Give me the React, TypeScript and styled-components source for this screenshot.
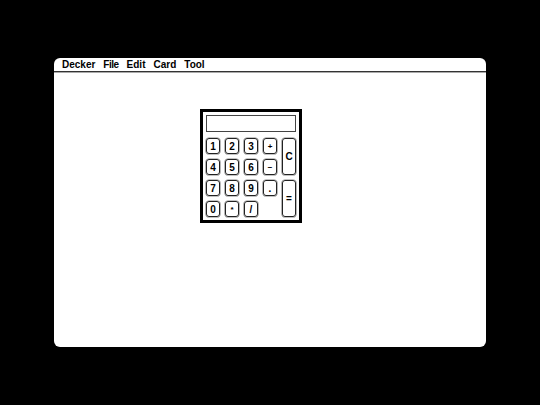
import React from "react";
import styled, { createGlobalStyle } from "styled-components";

const Global = createGlobalStyle`
  html, body { margin: 0; padding: 0; background: #000; }
  body { width: 540px; height: 405px; overflow: hidden; font-family: "Liberation Sans", Arial, sans-serif; }
`;

const Stage = styled.div`
  width: 540px;
  height: 405px;
  box-sizing: border-box;
  padding: 58px 54px 0 54px;
  background: #000;
`;

const Screen = styled.div`
  width: 432px;
  height: 289px;
  background: #fff;
  border-radius: 6px;
  display: flex;
  flex-direction: column;
  overflow: hidden;
`;

const MenuBar = styled.div`
  height: 13px;
  display: flex;
  align-items: center;
  gap: 8px;
  padding-left: 8px;
  border-bottom: 1px solid #333;
  box-shadow: 0 1px 0 #aaa;
  flex-shrink: 0;
`;

const MenuItem = styled.span<{ $tight?: boolean }>`
  font-family: "Liberation Sans", Arial, sans-serif;
  font-weight: bold;
  font-size: 10px;
  line-height: 13px;
  color: #000;
  letter-spacing: ${(p) => (p.$tight ? "-0.5px" : "0")};
`;

const CardArea = styled.div`
  flex: 1;
  padding: 37px 0 0 146px;
`;

const Calculator = styled.div`
  width: 90px;
  border: 3px solid #000;
  padding: 3px;
  background: #fff;
  display: flex;
  flex-direction: column;
  gap: 6px;
`;

const Display = styled.div`
  height: 15px;
  border: 1px solid #444;
`;

const Keys = styled.div`
  display: grid;
  grid-template-columns: 14px 14px 14px 14px 14px;
  grid-template-rows: 16px 16px 16px 16px;
  column-gap: 5px;
  row-gap: 5px;
`;

const Key = styled.div<{ $tall?: boolean }>`
  box-sizing: border-box;
  border: 1px solid #222;
  border-radius: 3px;
  box-shadow: 0 0 0 0.6px #888;
  display: flex;
  align-items: center;
  justify-content: center;
  font-family: "Liberation Sans", Arial, sans-serif;
  font-weight: bold;
  font-size: 10px;
  color: #000;
  grid-row: ${(p) => (p.$tall ? "span 2" : "auto")};
`;

const SmallSym = styled.span`
  font-size: 8px;
`;

export default function App() {
  return (
    <>
      <Global />
      <Stage>
        <Screen>
          <MenuBar>
            <MenuItem>Decker</MenuItem>
            <MenuItem $tight>File</MenuItem>
            <MenuItem>Edit</MenuItem>
            <MenuItem>Card</MenuItem>
            <MenuItem>Tool</MenuItem>
          </MenuBar>
          <CardArea>
            <Calculator>
              <Display />
              <Keys>
                <Key>1</Key>
                <Key>2</Key>
                <Key>3</Key>
                <Key><SmallSym>+</SmallSym></Key>
                <Key $tall>C</Key>
                <Key>4</Key>
                <Key>5</Key>
                <Key>6</Key>
                <Key><SmallSym>−</SmallSym></Key>
                <Key>7</Key>
                <Key>8</Key>
                <Key>9</Key>
                <Key>.</Key>
                <Key $tall>=</Key>
                <Key>0</Key>
                <Key><SmallSym>*</SmallSym></Key>
                <Key>/</Key>
              </Keys>
            </Calculator>
          </CardArea>
        </Screen>
      </Stage>
    </>
  );
}
